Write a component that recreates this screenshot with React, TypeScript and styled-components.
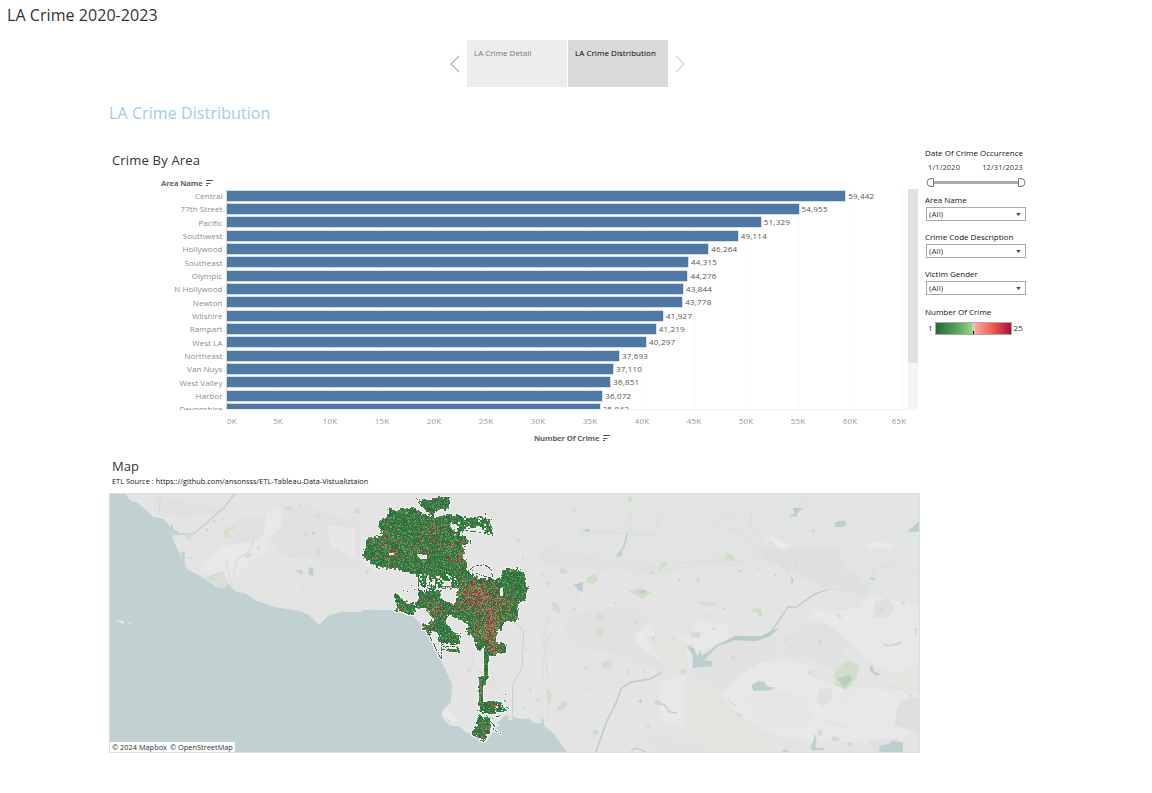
import React from "react";
import styled, { createGlobalStyle } from "styled-components";

const Global = createGlobalStyle`
  * { box-sizing: border-box; }
  body { margin: 0; background: #fff; font-family: "Open Sans", "Noto Sans", sans-serif; color: #333; overflow: hidden; }
`;

const Page = styled.div`width: 1152px; height: 793px; display: flex; flex-direction: column;`;
const Text = styled.span<{ $size: number; $gap?: number; $color?: string; $weight?: number }>`
  display: block;
  font-size: ${p => p.$size}px;
  letter-spacing: ${p => p.$gap ?? 0}px;
  color: ${p => p.$color ?? "#333"};
  font-weight: ${p => p.$weight ?? 400};
  white-space: nowrap;
`;
const StoryTitle = styled.header`height: 40px; line-height: 31px; padding-left: 7px;`;
const StoryNav = styled.nav`display: flex; height: 47px; padding-left: 443px; align-items: center;`;
const Arrow = styled.button`
  width: 24px; height: 47px; padding: 0; border: 0; background: none; display: flex; align-items: center; justify-content: center;
`;
const Point = styled.div<{ $active?: boolean }>`
  width: 100px; height: 47px; padding: 7px 7px; line-height: 12px;
  background: ${p => (p.$active ? "#dadada" : "#ececec")};
  & + & { margin-left: 1px; }
`;
const Heading = styled.h1`margin: 0; height: 53px; line-height: 52px; padding-left: 109px; font-weight: 400;`;
const Dashboard = styled.div`display: flex; padding-left: 109px;`;
const Main = styled.main`width: 811px;`;
const SheetTitle = styled.h2`margin: 0; height: 37px; line-height: 40px; padding-left: 3px; font-weight: 400;`;
const ColumnHead = styled.div`height: 12px; line-height: 14px; padding-left: 52px; display: flex; gap: 2px; align-items: center;`;
const PlotArea = styled.div`display: flex; height: 221px; overflow: hidden;`;
const Names = styled.div`width: 117px; padding-right: 3.5px; height: 221px; overflow: hidden; display: grid; grid-auto-rows: 13.333px; text-align: right; line-height: 14px;`;
const Bars = styled.div`
  width: 682px; height: 221px; overflow: hidden; display: grid; grid-auto-rows: 13.333px;
  border-left: 1px solid #d4dce5; border-bottom: 1px solid #f0f0f0;
  background: repeating-linear-gradient(90deg, transparent 0 51px, #f9f9f9 51px 52px);
`;
const BarRow = styled.div`display: flex; align-items: center; gap: 3px; line-height: 14px;`;
const Bar = styled.div`height: 10px; background: #4e79a7; box-shadow: 0 0 0 .5px #aabdd4;`;
const Scroll = styled.div`width: 10px; height: 221px; background: #f5f5f5;`;
const Thumb = styled.div`height: 174px; background: #e1e1e1;`;
const Axis = styled.div`display: flex; height: 20px; line-height: 22px; padding-left: 118px;`;
const Tick = styled.div`
  width: 52px; flex: none; text-align: center;
  &:first-child { width: 25px; text-align: left; }
  &:last-child { width: 46px; }
`;
const AxisTitle = styled.div`height: 16px; line-height: 14px; padding-left: 425px; display: flex; gap: 3px; align-items: center;`;
const MapTitle = styled.h2`margin: 0; height: 29px; line-height: 41px; padding-left: 3px; font-weight: 400;`;
const Caption = styled.div`height: 18px; line-height: 13px; padding-left: 3px;`;
const MapFrame = styled.div`position: relative; width: 811px; height: 260px; svg { display: block; }`;
const Credit = styled.div`position: absolute; left: 1px; bottom: 1px; height: 10px; line-height: 11px; width: 125px; padding-left: 2px; background: rgba(255,255,255,.92); display: flex; gap: 3px;`;

const Side = styled.aside`width: 102px; margin-left: 5px; padding-top: 7px;`;
const FieldLabel = styled.div<{ $h: number }>`height: ${p => p.$h}px; line-height: 12px;`;
const Dates = styled.div`display: flex; justify-content: space-between; padding: 0 4px 0 3px; height: 14px; line-height: 13px;`;
const SliderBox = styled.div`height: 19px; padding: 2px 0 0 1px; svg { display: block; }`;
const Select = styled.div<{ $after: number }>`
  height: 14px; width: 100px; margin: 0 0 ${p => p.$after}px 1px; border: 1px solid #aaa; padding: 0 4px 0 2px;
  display: flex; align-items: center; justify-content: space-between; line-height: 12px;
`;
const Legend = styled.div`display: flex; align-items: center; gap: 2px; padding-left: 3px; height: 12px; line-height: 12px;`;
const Ramp = styled.div`
  width: 77px; height: 13px; border: 1px solid #aaa; display: flex; align-items: flex-end; justify-content: center;
  background: linear-gradient(90deg, #24693d, #56a55a 28%, #96d385 47%, #d7d0bd 50%, #ffa292 54%, #f05d52 75%, #b10c34);
`;
const Mark = styled.i`width: 1px; height: 3px; background: #000;`;

const data: [string, number][] = [
  ["Central", 59442], ["77th Street", 54955], ["Pacific", 51329], ["Southwest", 49114], ["Hollywood", 46264],
  ["Southeast", 44315], ["Olympic", 44276], ["N Hollywood", 43844], ["Newton", 43778], ["Wilshire", 41927],
  ["Rampart", 41219], ["West LA", 40297], ["Northeast", 37693], ["Van Nuys", 37110], ["West Valley", 36851],
  ["Harbor", 36072], ["Devonshire", 35843],
];

const SortIcon = () => (
  <svg width="8" height="8" viewBox="0 0 8 8" stroke="#555" fill="none"><path d="M1 1.500H8M1 4.500H5.500M1 6.500H3" /></svg>
);

type Pt = [number, number];
const poly = (s: string): Pt[] => s.trim().split(/\s+/).map(p => p.split(",").map(Number) as Pt);
const inside = (x: number, y: number, ps: Pt[]) => {
  let r = false;
  for (let i = 0, j = ps.length - 1; i < ps.length; j = i++) {
    const [a, b] = ps[i], [c, d] = ps[j];
    if (b > y !== d > y && x < ((c - a) * (y - b)) / (d - b) + a) r = !r;
  }
  return r;
};

const districts = [
  "118,68 140,78 165,70 185,66 206,76 216,88 240,94 258,98 272,92 284,88 296,92 306,102 300,126 328,148 345,155 360,165 358,182 336,183 345,198 341,215 350,235 353,262 380,275 384,300 350,312 330,318 320,306 300,312 280,310 262,304 245,316 228,300 212,300 206,275 185,266 160,264 140,250 120,254 100,245 82,250 62,230 44,224 38,205 46,188 48,165 66,155 92,153 96,142 82,125 90,104 112,98",
  "200,36 206,44 220,47 236,43 262,37 298,38 300,55 296,72 282,76 270,72 258,78 248,94 234,84 218,66 206,52",
  "288,88 318,90 338,93 364,101 382,98 400,92 406,104 420,108 419,122 430,124 430,152 414,152 404,138 390,129 370,125 344,130 330,150 318,142 330,122 310,112 300,122",
  "350,288 380,278 412,280 440,284 452,278 460,253 480,254 500,248 512,260 526,262 525,300 540,305 532,322 530,346 504,352 504,408 460,408 457,434 442,436 442,475 467,475 467,505 440,506 437,513 414,512 410,490 400,488 390,498 380,494 376,464 362,452 344,438 358,428 358,414 336,410 320,400 296,388 308,365 320,345 320,320 330,308",
  "206,312 225,320 240,310 262,314 276,322 272,338 292,350 310,352 314,378 298,390 286,402 288,416 304,430 314,446 330,448 328,476 310,478 278,476 262,466 268,448 252,440 242,440 240,454 222,436 216,420 236,416 250,404 240,386 220,368 198,366 196,350 206,340",
  "136,328 148,330 156,342 172,352 188,350 198,360 193,392 172,386 150,378 136,374 144,358 134,342",
  "402,488 416,488 415,578 409,582 409,598 399,602 399,652 430,647 446,650 458,664 472,667 470,680 448,682 430,690 404,684 386,680 386,576 402,572",
  "382,698 390,688 402,700 412,692 422,706 420,742 412,752 404,768 388,760 366,748 368,738 380,724",
  "290,490 318,494 326,476 330,502 316,502 290,498",
].map(poly);
const gaps = [
  "272,322 280,312 294,312 304,316 312,324 320,324 318,340 310,350 290,350 276,342",
  "288,404 298,390 318,400 334,408 352,418 342,430 330,444 310,442 300,424",
  "200,206 214,206 218,212 232,208 232,223 210,223",
  "246,440 262,442 268,456 256,462 246,456",
  "450,310 459,306 458,334 450,334",
  "118,203 132,203 132,209 118,209",
  "400,614 408,614 408,640 400,640",
  "228,280 236,270 238,298 230,300",
  "246,300 248,284 254,282 254,302",
  "280,290 302,286 304,302 284,304",
  "262,84 274,70 284,82 276,92 262,94",
].map(poly);
const trails = [
  "274,472 272,516", "228,434 272,520", "280,484 314,482", "276,492 310,498", "352,260 372,240 402,238 420,250 428,276", "366,256 392,270 420,276",
  "205,250 204,316", "220,268 222,318", "212,300 236,308", "225,290 228,320", "418,700 450,690", "424,712 440,732", "428,730 450,745", "456,640 466,650", "404,84 406,100",
  "346,134 380,140 412,146", "130,102 142,96 146,106",
].map(poly);

// Repeatable value noise for the city-block density marks.
const hash = (x: number, y: number, s = 0) => {
  let h = Math.imul(x + 374, 668265263) ^ Math.imul(y + 91, 374761393) ^ Math.imul(s + 7, 1274126177);
  h = Math.imul(h ^ (h >>> 13), 1274126177);
  h = Math.imul(h ^ (h >>> 15), 2246822519);
  return ((h ^ (h >>> 16)) >>> 0) / 4294967296;
};
const hot: [number, number, number, number, number][] = [
  [375, 310, 45, 26, .34], [405, 350, 50, 42, .34], [345, 350, 34, 34, .22], [425, 425, 24, 42, .5], [430, 490, 22, 26, .36], [385, 440, 24, 24, .26],
  [245, 155, 50, 50, .2], [110, 185, 22, 55, .2], [180, 200, 60, 20, .14], [325, 215, 22, 42, .28], [255, 370, 22, 28, .34],
  [470, 350, 30, 40, .14], [295, 485, 20, 8, .4], [405, 740, 10, 18, .3], [430, 665, 24, 12, .26], [392, 620, 6, 50, .18], [230, 428, 14, 14, .22], [160, 372, 22, 10, .14],
];
const shades = ["#26723e", "#2e7a43", "#3b8648", "#56924e", "#7f9c60", "#a88d60", "#c25552", "#b4283f"];
const cellPaths = (() => {
  const out = shades.map(() => "");
  const halo: string[] = [];
  const put = (px: number, py: number, k: number) => {
    out[k] += `M${px} ${py}h1v1h-1z`;
    halo.push(`M${px - 1} ${py - 1}h3v3h-3z`);
  };
  const pick = (px: number, py: number, x: number, y: number) => {
    let heat = .04;
    for (const [cx, cy, rx, ry, a] of hot) heat += a * Math.exp(-(((x - cx) / rx) ** 2) - ((y - cy) / ry) ** 2);
    const r = hash(px, py, 1);
    const t = hash(px, py, 2);
    if (r < heat * .7) return t < .35 ? 6 : 7;
    if (r < heat * 1.02) return 5;
    if (r < heat * 1.02 + .17 + heat * .2) return t < .5 ? 4 : 3;
    return t < .5 ? 0 : t < .82 ? 1 : 2;
  };
  for (let py = 494; py < 745; py++) for (let px = 360; px < 532; px++) {
    const x = (px - 350 + .5) * 3, y = (py - 485 + .5) * 3;
    const strip = y > 490 && y < 650;
    const wobble = strip ? 2 : 9;
    const jx = x + (hash(px >> 1, py >> 1, 3) - .5) * wobble, jy = y + (hash(px >> 1, py >> 1, 4) - .5) * wobble;
    if (!districts.some(d => inside(jx, jy, d)) || gaps.some(g => inside(x, y, g))) continue;
    const hills = y > 266 && y < 318 && x > 205 && x < 325;
    const sparse = hills ? .15 : (y < 150 && x > 305) ? .07 : (y > 645 && x > 435) ? .18 : 0;
    if (hash(px >> 1, py >> 1, 5) < sparse || hash(px, py, 6) < sparse * .3) continue;
    put(px, py, pick(px, py, x, y));
  }
  for (const line of trails) for (let i = 1; i < line.length; i++) {
    const [a, b] = line[i - 1], [c, d] = line[i];
    const n = Math.ceil(Math.hypot(c - a, d - b) / 3);
    for (let j = 0; j <= n; j++) {
      const px = Math.round(350 + (a + ((c - a) * j) / n) / 3), py = Math.round(485 + (b + ((d - b) * j) / n) / 3);
      if (hash(px, py, 8) < .72) put(px, py, hash(px, py, 9) < .12 ? 7 : 0);
    }
  }
  ([[182, 300], [172, 318], [192, 312], [160, 316], [423, 103], [384, 282], [408, 690], [466, 626], [300, 100]] as Pt[]).forEach(([x, y], i) =>
    put(Math.round(350 + x / 3), Math.round(485 + y / 3), i % 2 ? 7 : 0));
  return { out, halo: halo.join("") };
})();

const parksWest = "560,66 580,64 578,74 556,76|760,72 772,68 780,84 764,86|374,136 398,124 404,132 388,140 386,158 372,156|256,148 276,146 272,164 258,162|320,280 338,268 358,264 354,282 334,290|432,208 450,202 456,212 440,220|648,190 664,192 656,218 648,208|608,146 624,140 620,150 610,152|606,308 618,312 610,318|646,90 662,94 656,104|262,216 280,216 278,222 262,222|362,94 370,96 368,112|246,76 254,78 252,90|576,208 586,212 580,220|794,256 810,250 800,266|470,186 482,184 476,196|596,48 604,64 598,70";
const parksEast = "556,202 568,206 584,216 582,228 556,228|140,276 166,268 174,284 160,298 138,292|266,318 300,308 334,322 306,342 288,330|362,230 382,228 378,242 356,260|636,372 662,368 668,392 656,398 652,382 638,382|168,388 194,390 190,402 170,400|170,432 190,430 186,454 168,448|462,274 480,280 476,294|36,352 50,354 64,378 56,386 40,374|56,252 72,248 88,266 64,266|158,734 176,736 176,750 158,750|344,646 360,644 360,662 344,660|24,620 36,626 32,656 22,652|66,648 84,654 70,674 46,680|832,736 848,736 846,752 834,752|876,752 900,758 896,770 876,768|914,776 938,772 932,786|262,34 282,36 268,54|94,72 108,74 102,80|574,514 584,512 584,524 574,526|802,560 816,556 814,574|588,684 606,688 598,700|554,640 592,662 584,664|1122,432 1134,430 1128,450|880,380 906,394 900,400|1080,350 1094,348 1094,362|184,532 214,526 214,548 190,548|130,544 142,540 138,558|260,556 268,558 266,580|308,552 314,554 314,576|278,266 300,268 296,272|320,264 344,256 340,268|764,234 772,246 768,254|814,236 818,250 814,250|502,334 516,336 512,340|496,384 502,386 498,402|508,430 524,428 524,436|726,464 740,462 742,470|280,412 294,402 290,416|218,352 228,350 228,360|334,452 344,458 342,474|392,458 406,456 404,466|420,556 438,552 432,570|434,480 460,478 458,488|684,174 694,172 694,184|1106,626 1116,628 1110,636|780,738 784,744 778,744|138,608 154,608 150,614|54,592 62,594 60,600|314,724 332,718 328,728|20,288 26,290 22,302|0,266 8,268 6,278|96,368 108,370 104,378|660,250 652,246 646,258|1022,472 1050,480 1090,466 1080,480 1040,486|1004,376 1030,372 1040,356 1030,380";
const toPath = (s: string) => s.split("|").map(p => "M" + p + "Z").join("");

const BaseMap = () => (
  <svg width="811" height="260" viewBox="109 493 811 260">
    <defs>
      <filter id="soft" x="-10%" y="-10%" width="120%" height="120%"><feGaussianBlur stdDeviation="4" /></filter>
    </defs>
    <rect x="109" y="493" width="811" height="260" fill="#e4e4e4" />
    <g transform="translate(100 485) scale(.33333)">
      <path d="M230 24L840 24V90L700 95 680 75 640 60 550 68 545 120 490 130 440 150 380 110 340 80Z" fill="#e3e4e3" />
      <path d="M390 300L420 270 520 245 700 235 840 258V400H600L500 360Z" fill="#e1e4e0" filter="url(#soft)" />
      <path d="M155 36L240 40 260 52 370 70 350 88 250 96 180 80Z M360 130L440 94H495V150L470 175 410 182Z M500 160L545 130 550 68 630 60 690 90 780 110 780 245 690 250 640 220 560 220Z" fill="#dfdfdf" opacity=".6" />
      <path d="M300 260L360 185 450 170 490 150 500 80 545 72 540 130 500 170 510 200 460 220 390 290 360 270Z M680 120L765 130V220L690 180Z" fill="#eaeaea" opacity=".7" />
      <path d="M310 280L370 258 388 305 355 306Z" fill="#dddddd" />
      <g fill="none" stroke="#c5d3d3" strokeWidth="3"><path d="M405 26L372 68 282 146 216 148" strokeWidth="5" /><path d="M184 28L176 90M378 226L392 290M466 145L452 195 410 225 400 270" strokeWidth="2" /></g>
      <path d={toPath(parksWest)} fill="#d1dfca" />
      <path d={toPath("212,118 218,120 222,136 236,138 232,146 210,144|244,202 254,200 254,240 246,224|586,256 608,256 606,270 596,262|626,246 640,250 638,274 626,268|634,140 648,142 640,150|316,130 324,132 322,140|338,106 346,108 344,114")} fill="#bfd0d0" />
    </g>
    <g transform="translate(540 485) scale(.33333)">
      <path d="M-560 24H1140V370L980 330 960 370 900 350 905 184 660 195 635 230 555 205 380 242 290 220 225 225 110 190 0 180-60 130-180 100-380 60-560 40Z" fill="#e1e4e0" />
      <path d="M0 190L110 195 220 232 285 220 380 246 555 210 635 232 660 198 900 186 900 270 1000 260 1010 280 985 340 930 315 860 310 740 245 680 225 600 240 480 238 350 270 220 248 100 250 0 235Z" fill="#dddddd" opacity=".5" filter="url(#soft)" />
      <path d="M900 184V240L920 260 1010 260 1140 250V370L990 340Z" fill="#e1e4e0" />
      <path d="M660 195L905 184 892 275 860 300 770 270 680 225Z" fill="#dddddd" opacity=".6" />
      <path d="M60 420L120 380 280 360 330 400 290 440 300 480 400 520 420 560 330 550 240 510 120 490Z M500 500L560 460 700 455 720 520 660 540 550 625 490 590 450 560Z M810 415H860L925 470 890 560 820 525 740 510 720 460Z" fill="#dddddd" opacity=".35" filter="url(#soft)" />
      <path d="M280 455L318 418 350 452 440 455 480 410 560 420 565 460 500 490 450 550 400 555 310 495Z M465 415L470 405 570 430 565 460 520 445Z M800 400L815 370 870 378 960 370 990 330 1140 360V560L1040 560 980 530 925 470 860 415Z M545 625L590 575 655 535 720 525 800 540 820 580 890 600 960 610 1140 620V650L1080 640 1060 720 1120 740 1080 770 820 770 700 750 600 690 550 640Z M355 590L440 570 440 740 360 700Z" fill="#e9e9e9" opacity=".8" />
      <path d="M430 590L450 575 550 640 610 715 690 755V800H500L430 730Z M310 450L430 460 450 550 390 550Z M1080 560L1140 530V630L1080 600Z" fill="#e0e4de" opacity=".85" />
      <path d="M600 640L700 610 800 640 820 700 760 740 680 720Z M735 755L775 765 760 795 735 785Z M280 740L480 765 500 800H340Z" fill="#dddddd" opacity=".22" filter="url(#soft)" />
      <path d="M840 612L875 610 880 640 850 665 828 645Z M1005 350L1040 340 1065 360 1045 400 1000 395Z M1070 665L1110 635 1140 640V750L1065 720Z M985 765L1080 760 1060 800H1000Z" fill="#dddddd" opacity=".8" />
      <path d="M665 140L705 160 755 186 720 192 690 175Z M970 180L1010 170 1070 178 1060 190 990 188Z" fill="#ebebeb" filter="url(#soft)" />
      <path d="M470 350L526 350V362H500Z M452 440L482 442 480 458H452Z" fill="#d9d9d9" />
      <path d={toPath(parksEast)} fill="#cfdec8" />
      <path d="M884 560L920 526 958 540 950 580 918 616 884 600Z" fill="#d2ddcb" /><path d="M892 580L932 570 934 586 912 610Z M294 320L316 314 312 328Z" fill="#b8cfc0" />
      <g fill="none" stroke="#cfd6d5" strokeWidth="2">
        <path d="M130 138L190 142 260 145 345 150 360 100 375 68M265 140L275 70M0 445L40 370 90 310 140 290 210 235 240 210 262 148M120 300L105 370 60 400 30 450 8 520 12 600 26 660 20 710M530 75L570 95 605 140 650 190 720 230 757 285M640 70L628 120 680 150 720 205 757 285M520 120L600 142M810 30L770 70M908 220L890 290 860 315M860 312L950 320 985 300 1005 250 1065 238M1135 645L1110 625 990 580 940 620 860 710 825 760M860 710L920 728" strokeWidth="1.4" />
        <path d="M168 800L200 710 230 650 242 612 270 592 330 582 365 562M262 145L252 185 232 216M860 314L820 330 770 366 744 366 690 445 650 462 580 460 530 482 490 520" stroke="#bccdcd" strokeWidth="4.5" />
        <path d="M275 800Q280 780 315 800M358 655L375 660 388 680 410 684M825 750L820 790 852 792" stroke="#bccdcd" strokeWidth="4" />
      </g>
      <path d="M540 484L585 452 660 454 720 426 690 454 650 468 580 466Z" fill="#b6cec2" />
      <path d="M440 484L462 490 472 512 482 494 484 512 540 478 510 506 494 526 516 528 516 544 458 548 458 512Z M634 600L655 588 672 590 684 606 708 608 690 616 640 618Z M988 542L998 542 1002 560 1022 566 1010 572 990 558Z M1018 782L1048 776 1056 766 1088 772 1090 802H1018Z M758 68L790 70 774 82 768 96 746 92 764 86Z M886 112L914 106 920 120 902 126 884 126Z M1102 140L1138 108 1138 140Z M100 300L130 290 128 320 116 316Z M813 780L830 756 826 788 850 788 852 796 814 796Z M724 800L738 792 748 802Z M985 280L1005 278 1004 286Z M754 280L760 282 758 296 754 294Z M294 648L306 642 304 656Z M414 280L422 282 420 290Z M596 256L608 256 600 262Z M702 266L708 268 706 276Z M832 460L844 474 838 476Z M230 208L248 190 244 216Z M548 370L558 370 556 376Z M124 136L150 132 148 142Z M814 134L824 136 820 142Z M422 230L432 232 430 236Z" fill="#bccfcf" />
    </g>
    <path d="M109 493H124L131 501 138 503 153 517 164 519 171 528 173 540 187 569 202 577 216 587 224 588 228 584 237 592 245 593 255 600 274 607 300 611 309 615 319 625 328 616 340 612 360 612 363 610H398L412 615 425 629 436 650 445 669 452 684 451 702 443 710 442 717 449 725 460 727 466 732 480 738 486 742 497 727 506 723 515 719 530 724 541 723 553 733 568 753H109Z" fill="#c1d1d1" />
    <g transform="translate(350 485) scale(.33333)">
      <path d="M440 715L468 690 480 696 470 702 486 706 490 695 512 702 535 700 560 720 578 710 570 692 582 704V750H490L470 728 450 720Z" fill="#c1d1d1" />
      <path d="M600 405L580 460 592 560 600 590M370 510V535L390 560 466 640" fill="none" stroke="#ced6d5" strokeWidth="2" />
      <path d="M460 404L500 415 521 440 516 550 488 598 488 700" fill="none" stroke="#c2d1d1" strokeWidth="3" />
      <path d={toPath("12,74 30,74 28,86 12,84|392,178 396,188 390,186|500,160 512,168 504,176|516,212 522,214 520,236|568,264 580,266 578,278|588,290 600,290 596,306 588,302|352,550 362,552 362,562 352,562|552,382 560,384 558,390|526,486 532,488 528,504|426,576 434,580 430,598|536,606 546,612 540,624|590,612 600,616 596,652|554,642 568,640 566,654|292,702 300,704 296,720|518,664 528,668 520,674")} fill="#d0dfc9" />
      <path d="M274 684L290 675 302 680 300 695 324 695 320 715 285 700Z" fill="#eaeaea" />
    </g>
    <path d="M115 620L123 621 125 624 121 623ZM127 623L130 622 133 624ZM135 620L141 619Z" fill="#e6e8e5" />
    <path d={cellPaths.halo} fill="#edeeed" shapeRendering="crispEdges" />
    {cellPaths.out.map((d, i) => <path key={shades[i]} d={d} fill={shades[i]} shapeRendering="crispEdges" />)}
    <rect x="109.5" y="493.5" width="810" height="259" fill="none" stroke="#dcdfde" />
  </svg>
);

const Filter = ({ label, after }: { label: string; after: number }) => (
  <>
    <FieldLabel $h={13}><Text $size={8} $color="#111">{label}</Text></FieldLabel>
    <Select $after={after}>
      <Text $size={8} $gap={0.1}>(All)</Text>
      <svg width="5" height="3" viewBox="0 0 5 3"><path d="M.3 0H4.700L2.500 3Z" fill="#444" /></svg>
    </Select>
  </>
);

export default function App() {
  return (
    <Page>
      <Global />
      <StoryTitle><Text $size={16} $gap={0.06}>LA Crime 2020-2023</Text></StoryTitle>
      <StoryNav>
        <Arrow aria-label="Previous"><svg width="10" height="18" viewBox="0 0 10 18"><path d="M9 1L1 9L9 17" fill="none" stroke="#bdbdbd" strokeWidth="1.6" /></svg></Arrow>
        <Point><Text $size={8} $color="#777">LA Crime Detail</Text></Point>
        <Point $active><Text $size={8} $gap={0.05} $color="#000">LA Crime Distribution</Text></Point>
        <Arrow aria-label="Next"><svg width="10" height="18" viewBox="0 0 10 18"><path d="M1 1L9 9L1 17" fill="none" stroke="#dedede" strokeWidth="1.6" /></svg></Arrow>
      </StoryNav>
      <Heading><Text $size={16} $gap={0.09} $color="#a3cbe8">LA Crime Distribution</Text></Heading>
      <Dashboard>
        <Main>
          <SheetTitle><Text $size={13} $gap={0.18}>Crime By Area</Text></SheetTitle>
          <ColumnHead><Text $size={7.7} $gap={-0.15} $weight={700} $color="#666">Area Name</Text><SortIcon /></ColumnHead>
          <PlotArea>
            <Names>{data.map(([n]) => <Text key={n} $size={8} $gap={0.06} $color="#8c8c8c">{n}</Text>)}</Names>
            <Bars>
              {data.map(([n, v]) => (
                <BarRow key={n}><Bar style={{ width: v * 0.0104 }} /><Text $size={8} $gap={0.2} $color="#555">{v.toLocaleString("en-US")}</Text></BarRow>
              ))}
            </Bars>
            <Scroll><Thumb /></Scroll>
          </PlotArea>
          <Axis>
            {Array.from({ length: 14 }, (_, i) => (
              <Tick key={i}><Text $size={8} $gap={0.1} $color="#999">{i * 5}K</Text></Tick>
            ))}
          </Axis>
          <AxisTitle><Text $size={7.7} $gap={-0.15} $weight={700} $color="#666">Number Of Crime</Text><SortIcon /></AxisTitle>
          <MapTitle><Text $size={13} $gap={0.1}>Map</Text></MapTitle>
          <Caption><Text $size={7.3} $gap={0.06} $color="#111">ETL Source : https:://github.com/ansonsss/ETL-Tableau-Data-Vistualiztaion</Text></Caption>
          <MapFrame>
            <BaseMap />
            <Credit><Text $size={7.3} $gap={0.05}>© 2024 Mapbox</Text><Text $size={7.3} $gap={0.05}>© OpenStreetMap</Text></Credit>
          </MapFrame>
        </Main>
        <Side>
          <FieldLabel $h={14}><Text $size={8} $color="#111">Date Of Crime Occurrence</Text></FieldLabel>
          <Dates><Text $size={7.5} $gap={0.1}>1/1/2020</Text><Text $size={7.5} $gap={0.1}>12/31/2023</Text></Dates>
          <SliderBox>
            <svg width="101" height="11" viewBox="0 0 101 11">
              <path d="M7 5.5H92" stroke="#aaa" strokeWidth="3" />
              <path d="M7.500 1.500V9.500H5Q1 9.500 1 5.500Q1 1.500 5 1.500ZM92.500 1.500V9.500H95Q99 9.500 99 5.500Q99 1.500 95 1.500Z" fill="#fff" stroke="#777" />
            </svg>
          </SliderBox>
          <Filter label="Area Name" after={10} />
          <Filter label="Crime Code Description" after={10} />
          <Filter label="Victim Gender" after={11} />
          <FieldLabel $h={16}><Text $size={8} $color="#111">Number Of Crime</Text></FieldLabel>
          <Legend><Text $size={8}>1</Text><Ramp><Mark /></Ramp><Text $size={8}>25</Text></Legend>
        </Side>
      </Dashboard>
    </Page>
  );
}
